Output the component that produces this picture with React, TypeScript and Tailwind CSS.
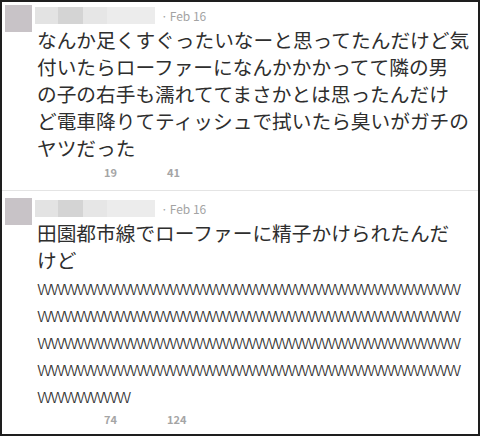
import React from "react";

type Tweet = {
  lines: string[];
  retweets: string;
  favorites: string;
};

const tweets: Tweet[] = [
  {
    lines: [
      "なんか足くすぐったいなーと思ってたんだけど気",
      "付いたらローファーになんかかかってて隣の男",
      "の子の右手も濡れててまさかとは思ったんだけ",
      "ど電車降りてティッシュで拭いたら臭いがガチの",
      "ヤツだった",
    ],
    retweets: "19",
    favorites: "41",
  },
  {
    lines: [
      "田園都市線でローファーに精子かけられたんだ",
      "けど",
      "w".repeat(32),
      "w".repeat(32),
      "w".repeat(32),
      "w".repeat(32),
      "w".repeat(7),
    ],
    retweets: "74",
    favorites: "124",
  },
];

// blurred-out screen name
const NameBlur = () => (
  <div className="flex h-[17px] w-[120px]">
    <div className="w-[23px] bg-[#e3e3e3]" />
    <div className="w-[25px] bg-[#d4d4d4]" />
    <div className="w-[24px] bg-[#e6e6e6]" />
    <div className="flex-1 bg-[#ececec]" />
  </div>
);

const TweetRow = ({ tweet, first }: { tweet: Tweet; first: boolean }) => (
  <div className={first ? "flex pl-[3px] pt-[3px]" : "flex pl-[3px] pt-[7px]"}>
    <div className="h-[27px] w-[27px] shrink-0 bg-[#c8c3c7]" />
    <div className="ml-[3px] flex flex-col">
      <div className="mt-[2px] flex items-center">
        <NameBlur />
        <span className="ml-[6px] text-[12px] leading-none text-[#a3a3a3]">·</span>
        <span className="ml-[2px] text-[12px] leading-none text-[#a3a3a3]">Feb 16</span>
      </div>
      <div className="ml-[2px] mt-[2px] text-[19.7px] leading-[27px] text-[#2e2e2e] whitespace-nowrap">
        {tweet.lines.map((line, i) =>
          line.startsWith("w") ? (
            // laughing "w" runs sit tighter than the default advance
            <div key={i} className="tracking-[-1.9px] font-light text-[#333]">
              {line}
            </div>
          ) : (
            <div key={i}>{line}</div>
          )
        )}
      </div>
      <div className="mt-[4px] flex h-[14px] items-center text-[11px] font-bold leading-none text-[#a5a5a5]">
        <span className="ml-[69px] w-[63px]">{tweet.retweets}</span>
        <span>{tweet.favorites}</span>
      </div>
    </div>
  </div>
);

export default function App() {
  return (
    <div
      className="h-[436px] w-[480px] overflow-hidden border-2 border-[#1e1e1e] bg-white"
      style={{ fontFamily: '"Noto Sans CJK JP", "Noto Sans", sans-serif' }}
    >
      <TweetRow tweet={tweets[0]} first />
      <div className="mt-[11px] h-px bg-[#e4e4e4]" />
      <TweetRow tweet={tweets[1]} first={false} />
    </div>
  );
}
